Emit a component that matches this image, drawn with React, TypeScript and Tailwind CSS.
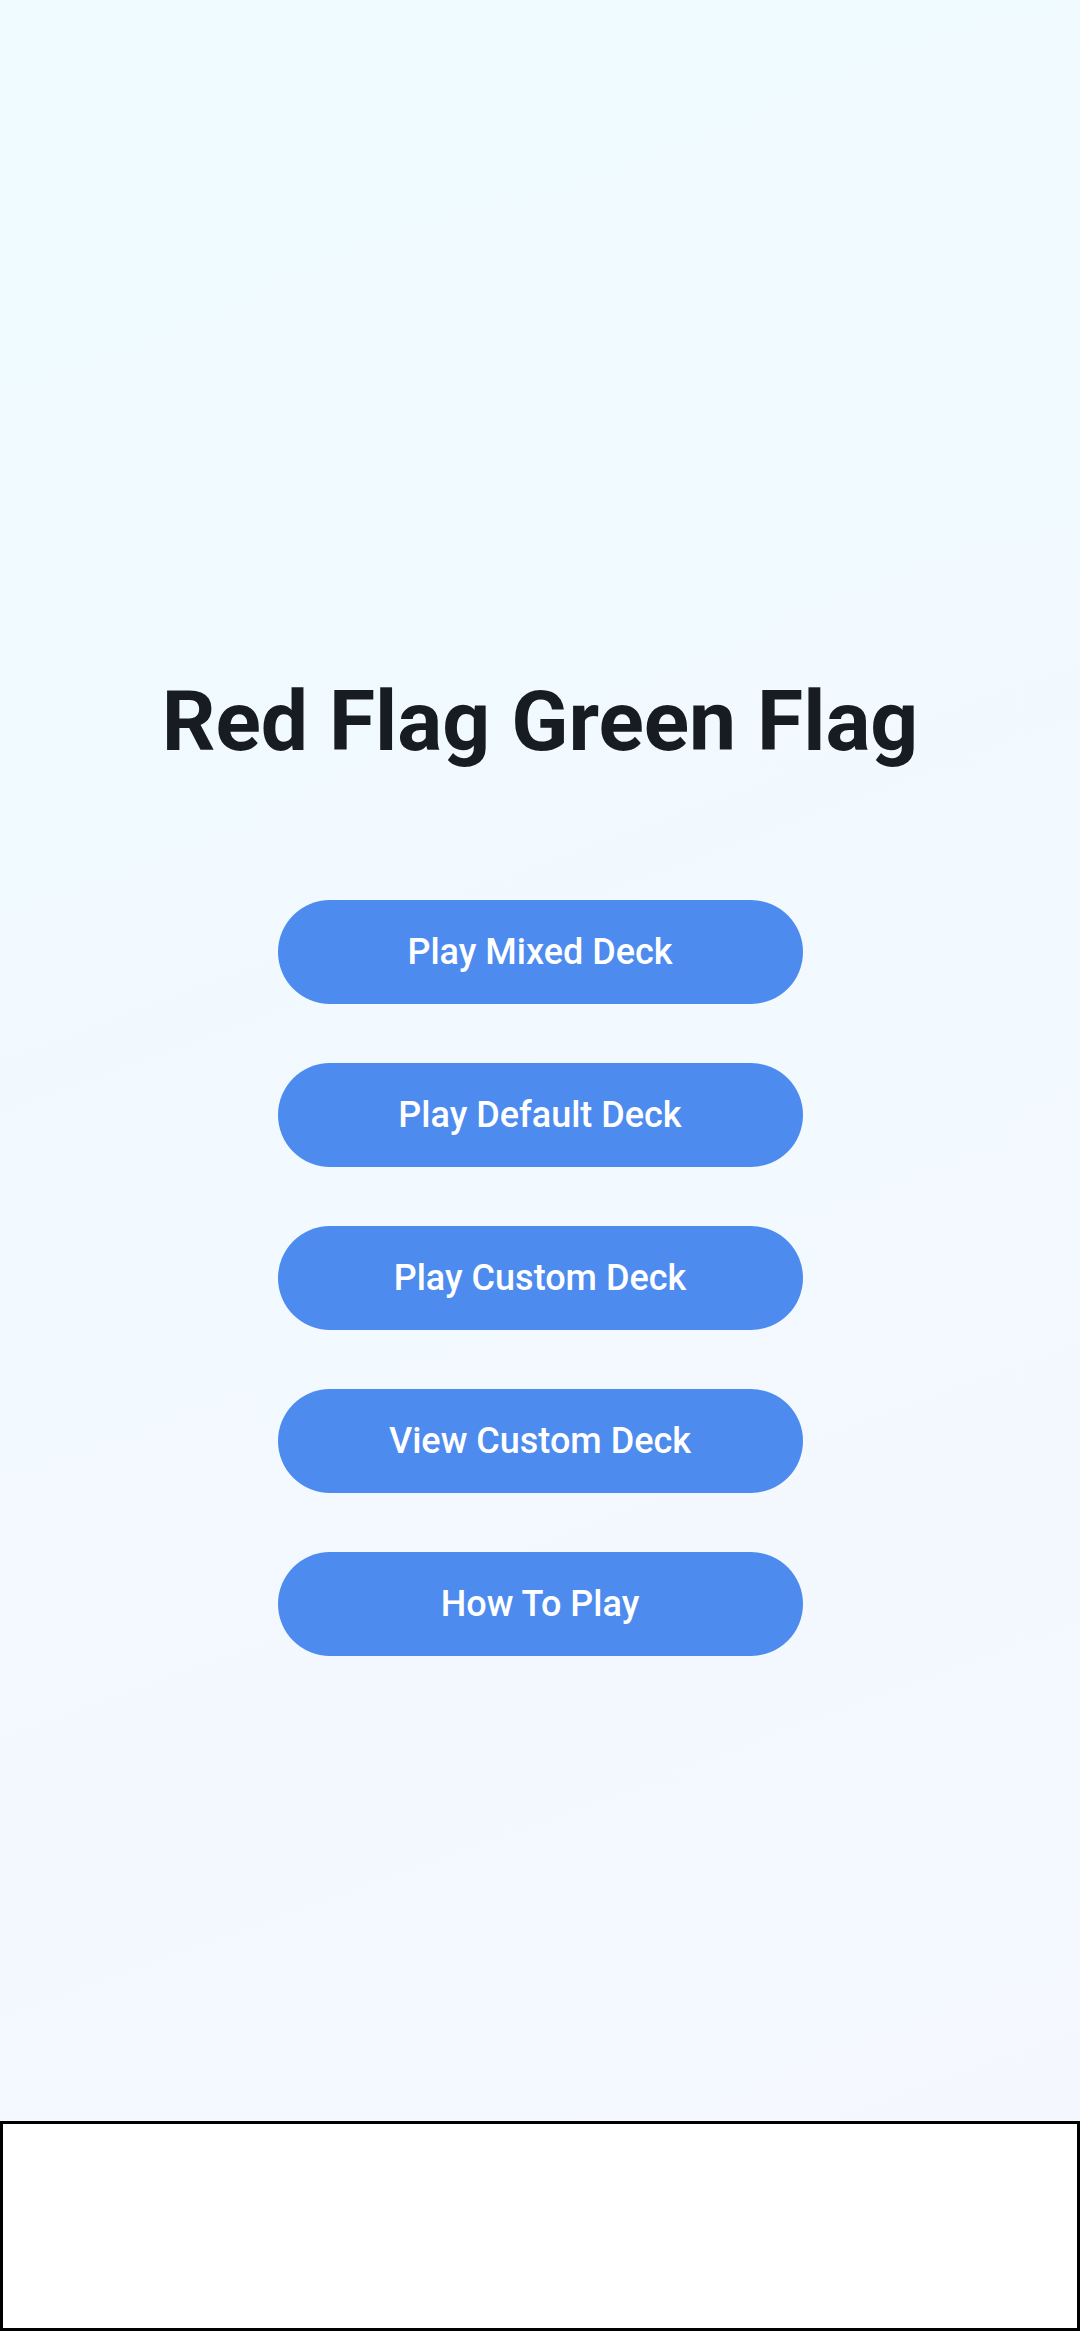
import React from "react";

const ITEMS = ["Play Mixed Deck", "Play Default Deck", "Play Custom Deck", "View Custom Deck", "How To Play"];

export default function App() {
  return (
    <div className="flex h-[2331px] w-full flex-col bg-[linear-gradient(160deg,#effbff_0%,#f2f9ff_50%,#f5f7ff_100%)] font-['Roboto','Liberation_Sans',sans-serif]">
      <main className="flex flex-1 flex-col items-center pt-[680px]">
        <h1 className="text-[84px] font-bold leading-none text-[#161c22]">Red Flag Green Flag</h1>
        <div className="mt-[136px] flex flex-col gap-[59px]">
          {ITEMS.map((label) => (
            <button
              key={label}
              className="flex h-[104px] w-[525px] items-center justify-center rounded-full bg-[#4d8bee] text-[36px] font-medium text-white"
            >
              {label}
            </button>
          ))}
        </div>
      </main>
      {/* ad slot */}
      <div className="h-[210px] w-full border-[3px] border-black bg-white" />
    </div>
  );
}
